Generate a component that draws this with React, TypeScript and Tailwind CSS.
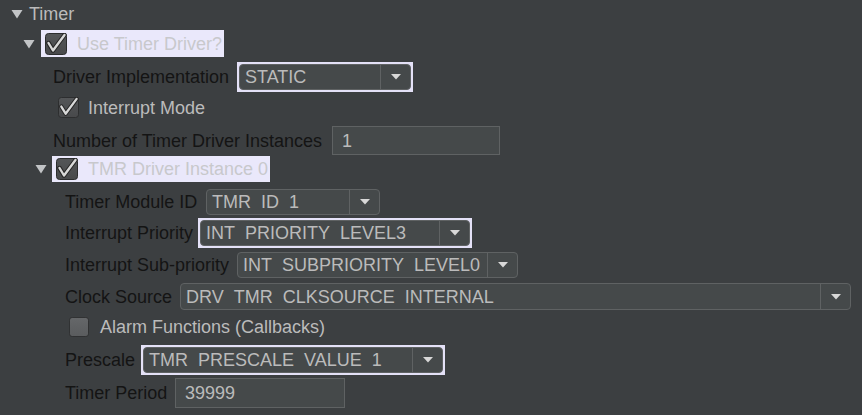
import React from "react";

const Tri = ({ cls = "" }: { cls?: string }) => (
  <svg width="12" height="10" viewBox="0 0 12 10" className={cls}>
    <polygon points="0.5,1 11.5,1 6,9.5" fill="#c2c4c6" />
  </svg>
);

const Check = ({ checked, size = 22 }: { checked: boolean; size?: number }) => (
  <svg width={size} height={size} viewBox="0 0 22 22" className="shrink-0">
    <defs>
      <linearGradient id={checked ? "gc" : "gu"} x1="0" y1="0" x2="0" y2="1">
        <stop offset="0" stopColor={checked ? "#545658" : "#656769"} />
        <stop offset="1" stopColor={checked ? "#48494b" : "#5a5c5e"} />
      </linearGradient>
    </defs>
    <rect x="0.5" y="0.5" width="21" height="21" rx="3" fill={`url(#${checked ? "gc" : "gu"})`} stroke="#2c2d2e" strokeWidth="1" />
    {checked && (
      <>
        <path d="M3.5 10 L8 17.5 L19.5 2" fill="none" stroke="#262626" strokeWidth="4.5" strokeLinecap="round" strokeLinejoin="round" />
        <path d="M3.5 10 L8 17.5 L19.5 2" fill="none" stroke="#d8d8d8" strokeWidth="2.4" strokeLinecap="round" strokeLinejoin="round" />
      </>
    )}
  </svg>
);

const V = ({ t }: { t: string }) => {
  const parts = t.split("_");
  return (
    <span className="whitespace-pre">
      {parts.map((p, i) => (
        <React.Fragment key={i}>
          {i > 0 && <span className="text-transparent">_</span>}
          {p}
        </React.Fragment>
      ))}
    </span>
  );
};

const Arrow = () => (
  <svg width="10" height="6" viewBox="0 0 10 6">
    <polygon points="0,0 10,0 5,5.5" fill="#d8d8d8" />
  </svg>
);

const Combo = ({ value, w, h = 26, arrowW = 30 }: { value: string; w: number; h?: number; arrowW?: number }) => (
  <div
    className="flex shrink-0 items-stretch rounded-[4px] border border-[#5f6263] bg-[#45494a] text-[#bbbbbb]"
    style={{ width: w, height: h }}
  >
    <div className="flex flex-1 items-center overflow-hidden pl-[5px]">
      <V t={value} />
    </div>
    <div className="flex items-center justify-center border-l border-[#5f6263]" style={{ width: arrowW }}>
      <Arrow />
    </div>
  </div>
);

const Focus = ({ value, w }: { value: string; w: number }) => (
  <div className="shrink-0 border-2 border-[#e4e1f7] bg-[#e4e1f7]" style={{ width: w, height: 30 }}>
    <Combo value={value} w={w - 4} h={26} />
  </div>
);

const Field = ({ value, w, h }: { value: string; w: number; h: number }) => (
  <div
    className="flex shrink-0 items-center border border-[#5f6263] bg-[#45494a] pl-[9px] text-[#bbbbbb]"
    style={{ width: w, height: h }}
  >
    {value}
  </div>
);

const Label = ({ text, w }: { text: string; w: number }) => (
  <div className="shrink-0 whitespace-nowrap text-[#141414]" style={{ width: w }}>
    {text}
  </div>
);

export default function App() {
  return (
    <div className="h-[415px] w-[862px] overflow-hidden bg-[#3c3f41] font-['Liberation_Sans',Arial,sans-serif] text-[18px] leading-none">
      {/* Timer */}
      <div className="flex h-[28px] items-center pl-[11px]">
        <Tri />
        <span className="ml-[6px] text-[#bbbbbb]">Timer</span>
      </div>
      {/* Use Timer Driver */}
      <div className="mt-[2px] flex h-[27px] items-center pl-[23px]">
        <Tri />
        <div className="ml-[6px] flex h-[27px] w-[183px] items-center bg-[#eae8fb] pl-[4px]">
          <Check checked />
          <span className="ml-[10px] whitespace-nowrap text-[#c8c8cc]">Use Timer Driver?</span>
        </div>
      </div>
      {/* Driver Implementation */}
      <div className="mt-[5px] flex h-[30px] items-center pl-[53px]">
        <Label text="Driver Implementation" w={184} />
        <Focus value="STATIC" w={176} />
      </div>
      {/* Interrupt Mode */}
      <div className="mt-[5px] flex h-[21px] items-center pl-[58px]">
        <Check checked size={21} />
        <span className="ml-[9px] text-[#bbbbbb]">Interrupt Mode</span>
      </div>
      {/* Number of instances */}
      <div className="mt-[8px] flex h-[29px] items-center pl-[53px]">
        <Label text="Number of Timer Driver Instances" w={279} />
        <Field value="1" w={168} h={29} />
      </div>
      {/* TMR Driver Instance 0 */}
      <div className="mt-[1px] flex h-[26px] items-center pl-[35px]">
        <Tri />
        <div className="ml-[5px] flex h-[26px] w-[218px] items-center bg-[#eae8fb] pl-[4px]">
          <Check checked />
          <span className="ml-[10px] whitespace-nowrap text-[#c8c8cc]">TMR Driver Instance 0</span>
        </div>
      </div>
      {/* Timer Module ID */}
      <div className="mt-[7px] flex h-[26px] items-center pl-[65px]">
        <Label text="Timer Module ID" w={141} />
        <Combo value="TMR_ID_1" w={174} />
      </div>
      {/* Interrupt Priority */}
      <div className="mt-[3px] flex h-[30px] items-center pl-[65px]">
        <Label text="Interrupt Priority" w={133} />
        <Focus value="INT_PRIORITY_LEVEL3" w={274} />
      </div>
      {/* Interrupt Sub-priority */}
      <div className="mt-[4px] flex h-[26px] items-center pl-[65px]">
        <Label text="Interrupt Sub-priority" w={172} />
        <Combo value="INT_SUBPRIORITY_LEVEL0" w={281} />
      </div>
      {/* Clock Source */}
      <div className="mt-[5px] flex h-[27px] items-center pl-[65px]">
        <Label text="Clock Source" w={115} />
        <Combo value="DRV_TMR_CLKSOURCE_INTERNAL" w={671} h={27} />
      </div>
      {/* Alarm Functions */}
      <div className="mt-[7px] flex h-[20px] items-center pl-[69px]">
        <Check checked={false} size={20} />
        <span className="ml-[11px] text-[#bbbbbb]">Alarm Functions (Callbacks)</span>
      </div>
      {/* Prescale */}
      <div className="mt-[8px] flex h-[30px] items-center pl-[65px]">
        <Label text="Prescale" w={76} />
        <Focus value="TMR_PRESCALE_VALUE_1" w={304} />
      </div>
      {/* Timer Period */}
      <div className="mt-[3px] flex h-[30px] items-center pl-[65px]">
        <Label text="Timer Period" w={110} />
        <Field value="39999" w={170} h={30} />
      </div>
    </div>
  );
}
